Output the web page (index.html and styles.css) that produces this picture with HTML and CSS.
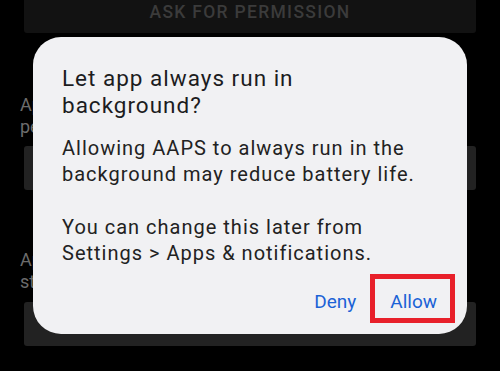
FILE: index.html
```html
<!DOCTYPE html>
<html>
<head>
<meta charset="utf-8">
<link rel="stylesheet" href="styles.css">
</head>
<body>
<div class="screen">
  <div class="bg-btn top-btn">ASK FOR PERMISSION</div>
  <div class="bg-text first">
    <span class="line">Application needs battery</span>
    <span class="line">permission for proper work</span>
  </div>
  <div class="bg-btn mid-btn"></div>
  <div class="bg-text second">
    <span class="line">Application needs access to</span>
    <span class="line">storage for log files</span>
  </div>
  <div class="bg-btn bottom-btn"></div>

  <div class="dialog">
    <h1 class="title">Let app always run in background?</h1>
    <p class="body">Allowing AAPS to always run in the background may reduce battery life.</p>
    <p class="body">You can change this later from Settings &gt; Apps &amp; notifications.</p>
    <div class="actions">
      <span class="action">Deny</span>
      <span class="action allow">Allow<span class="highlight"></span></span>
    </div>
  </div>
</div>
</body>
</html>
```

FILE: styles.css
```css
html, body {
  margin: 0;
  padding: 0;
  background: #000;
}

.screen {
  position: relative;
  width: 500px;
  height: 371px;
  overflow: hidden;
  background: #000;
  font-family: Roboto, "Liberation Sans", sans-serif;
  display: flex;
  flex-direction: column;
}

.bg-btn {
  margin: 0 24px;
  border-radius: 3px;
  text-align: center;
  font-weight: 500;
  font-size: 17.5px;
  letter-spacing: 1.3px;
  color: #3b3b3b;
  overflow: hidden;
  white-space: nowrap;
}

.top-btn {
  height: 33px;
  line-height: 25px;
  background: #121212;
  border-radius: 0 0 3px 3px;
}

.mid-btn, .bottom-btn {
  height: 44px;
  background: #222;
}

.mid-btn { margin-top: 8px; }
.bottom-btn { margin-top: 9px; }

.bg-text {
  margin-left: 20px;
  width: 13px;
  overflow: hidden;
  font-size: 18px;
  line-height: 22px;
  color: #6c6c6c;
  display: flex;
  flex-direction: column;
  white-space: nowrap;
}

.bg-text.first { margin-top: 61px; }
.bg-text.second { margin-top: 59px; }

.dialog {
  position: absolute;
  left: 33px;
  top: 37px;
  width: 434px;
  height: 297px;
  box-sizing: border-box;
  padding: 27.6px 30px 21px 29px;
  background: #f1f1f3;
  border-radius: 28px;
  display: flex;
  flex-direction: column;
}

.title {
  margin: 0;
  font-size: 22.5px;
  line-height: 27.5px;
  font-weight: 400;
  letter-spacing: 1px;
  color: #1c1c1e;
  width: 260px;
}

.body {
  margin: 0;
  width: 356px;
  font-size: 20px;
  line-height: 26.3px;
  letter-spacing: 1px;
  color: #222;
}

.title + .body { margin-top: 15.4px; }
.body + .body { margin-top: 26.3px; }

.actions {
  margin-top: auto;
  display: flex;
  justify-content: flex-end;
  gap: 34px;
}

.action {
  font-size: 19px;
  line-height: 22px;
  color: #1b62d6;
}

.allow {
  position: relative;
}

.highlight {
  position: absolute;
  left: -20px;
  right: -18px;
  top: -17px;
  bottom: -10px;
  border: 5px solid #e8202a;
}
```
